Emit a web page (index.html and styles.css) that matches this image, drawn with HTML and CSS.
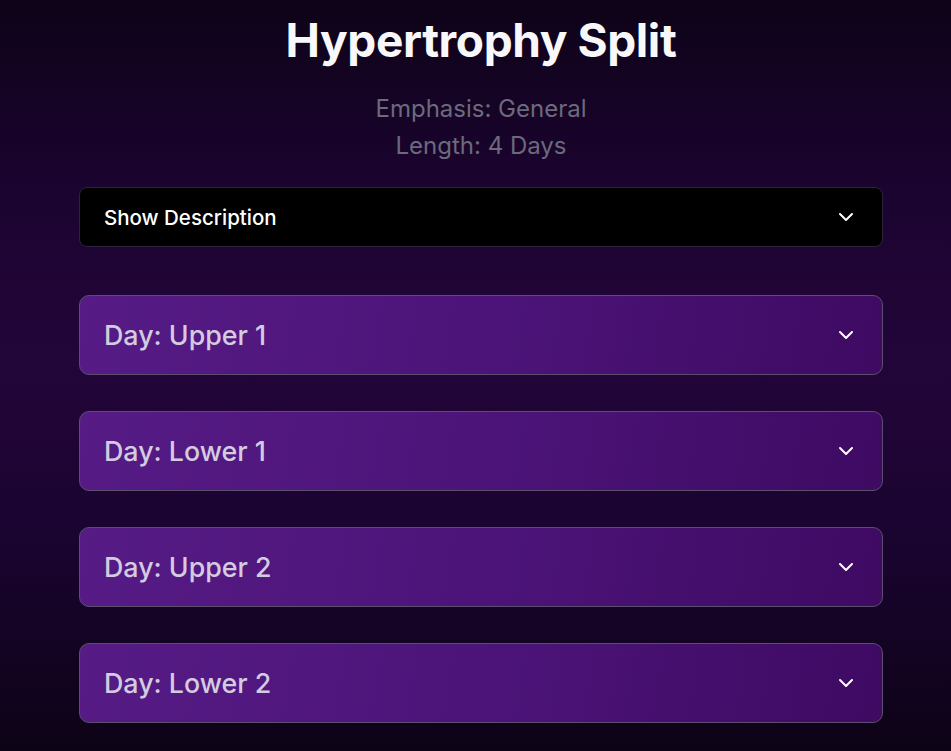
FILE: index.html
```html
<!DOCTYPE html>
<html lang="en">
<head>
<meta charset="utf-8">
<title>Hypertrophy Split</title>
<link rel="stylesheet" href="styles.css">
</head>
<body>
<main class="page">
  <header class="header">
    <h1 class="title">Hypertrophy Split</h1>
    <p class="meta">Emphasis: General</p>
    <p class="meta">Length: 4 Days</p>
  </header>

  <button class="desc-toggle" type="button">
    <span>Show Description</span>
    <svg class="chev" viewBox="0 0 24 24" width="24" height="24" fill="none" stroke="currentColor" stroke-width="2" stroke-linecap="round" stroke-linejoin="round"><polyline points="6 9 12 15 18 9"/></svg>
  </button>

  <section class="days">
    <button class="day" type="button">
      <span>Day: Upper 1</span>
      <svg class="chev" viewBox="0 0 24 24" width="24" height="24" fill="none" stroke="currentColor" stroke-width="2" stroke-linecap="round" stroke-linejoin="round"><polyline points="6 9 12 15 18 9"/></svg>
    </button>
    <button class="day" type="button">
      <span>Day: Lower 1</span>
      <svg class="chev" viewBox="0 0 24 24" width="24" height="24" fill="none" stroke="currentColor" stroke-width="2" stroke-linecap="round" stroke-linejoin="round"><polyline points="6 9 12 15 18 9"/></svg>
    </button>
    <button class="day" type="button">
      <span>Day: Upper 2</span>
      <svg class="chev" viewBox="0 0 24 24" width="24" height="24" fill="none" stroke="currentColor" stroke-width="2" stroke-linecap="round" stroke-linejoin="round"><polyline points="6 9 12 15 18 9"/></svg>
    </button>
    <button class="day" type="button">
      <span>Day: Lower 2</span>
      <svg class="chev" viewBox="0 0 24 24" width="24" height="24" fill="none" stroke="currentColor" stroke-width="2" stroke-linecap="round" stroke-linejoin="round"><polyline points="6 9 12 15 18 9"/></svg>
    </button>
  </section>
</main>
</body>
</html>
```

FILE: styles.css
```css
* { box-sizing: border-box; }

html, body {
  margin: 0;
  height: 100%;
}

body {
  font-family: Inter, "Noto Sans", "Liberation Sans", sans-serif;
  background: linear-gradient(180deg, #0e0318 0%, #1b0430 25%, #230539 48%, #1a0430 72%, #0d0316 100%);
  color: #fff;
  overflow: hidden;
}

.page {
  width: 804px;
  margin-left: 79px;
  padding-top: 13px;
}

.header {
  text-align: center;
}

.title {
  margin: 0;
  font-size: 46px;
  line-height: 54px;
  font-weight: 700;
  color: #f8f8fb;
  letter-spacing: -0.4px;
}

.meta {
  margin: 0;
  font-size: 24px;
  line-height: 37px;
  color: #6c6a7c;
}

.header .title + .meta {
  margin-top: 23px;
}

.desc-toggle {
  margin-top: 23px;
  width: 100%;
  height: 60px;
  display: flex;
  align-items: center;
  justify-content: space-between;
  padding: 0 24px;
  background: #000;
  border: 1px solid #2b2438;
  border-radius: 8px;
  color: #fff;
  font-family: inherit;
  font-size: 20.5px;
  font-weight: 550;
  text-align: left;
}

.chev {
  display: block;
  flex: none;
  color: #fff;
}

.days {
  margin-top: 48px;
  display: flex;
  flex-direction: column;
  gap: 36px;
}

.day {
  width: 100%;
  height: 80px;
  display: flex;
  align-items: center;
  justify-content: space-between;
  padding: 0 24px;
  background: linear-gradient(100deg, #561b85 0%, #4c1479 50%, #3e0a62 100%);
  border: 1px solid #5c4f6e;
  border-radius: 10px;
  color: #d3cce0;
  font-family: inherit;
  font-size: 26.8px;
  font-weight: 500;
  text-align: left;
}
```
